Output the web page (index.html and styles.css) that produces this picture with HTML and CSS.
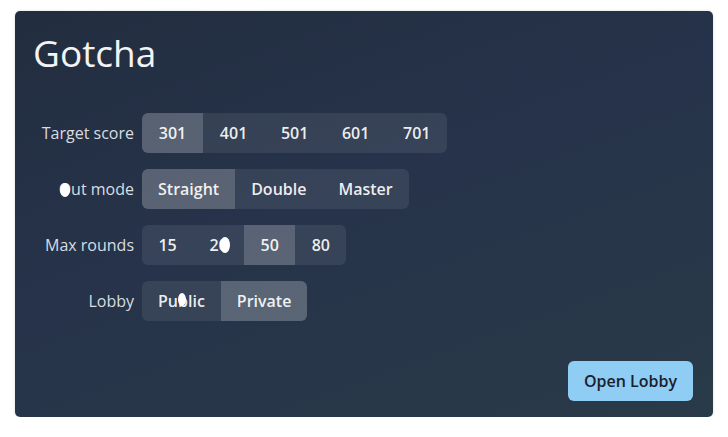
FILE: index.html
```html
<!DOCTYPE html>
<html lang="en">
<head>
    <meta charset="UTF-8">
    <meta name="viewport" content="width=device-width, initial-scale=1.0">
    <title>Gotcha</title>
    <link rel="stylesheet" href="styles.css">
</head>

<body>

<div class="modal">
    <h1 class="title">Gotcha</h1>

    <div class="options">
        <label class="option-label">Target score</label>
        <div class="group numeric">
            <button class="seg selected">301</button>
            <button class="seg">401</button>
            <button class="seg">501</button>
            <button class="seg">601</button>
            <button class="seg">701</button>
        </div>

        <label class="option-label">Out mode</label>
        <div class="group">
            <button class="seg selected">Straight</button>
            <button class="seg">Double</button>
            <button class="seg">Master</button>
        </div>

        <label class="option-label">Max rounds</label>
        <div class="group rounds">
            <button class="seg">15</button>
            <button class="seg">20</button>
            <button class="seg selected">50</button>
            <button class="seg">80</button>
        </div>

        <label class="option-label">Lobby</label>
        <div class="group">
            <button class="seg">Public</button>
            <button class="seg selected">Private</button>
        </div>
    </div>

    <div class="footer">
        <button class="open-btn">Open Lobby</button>
    </div>

    <!-- screen blots over the text -->
    <span class="blot blot-out"></span>
    <span class="blot blot-20"></span>
    <span class="blot blot-pub"></span>
</div>

</body>
</html>
```

FILE: styles.css
```css
body {
    font-family: "Open Sans", "Liberation Sans", sans-serif;
    margin: 0;
    padding: 11px 15px 0;
    background-color: #fff;
}
.modal {
    position: relative;
    width: 698px;
    box-sizing: border-box;
    padding: 20px 20px 16px;
    border-radius: 5px;
    background: linear-gradient(160deg, #222d3f 0%, #26334a 45%, #293a48 100%);
    box-shadow: 0 0 3px rgba(0, 0, 0, 0.15);
    color: rgba(255, 255, 255, 0.92);
}
.title {
    margin: 0 0 39px -2px;
    font-size: 37px;
    font-weight: 400;
    line-height: 43px;
    color: #f2f3f5;
}
.options {
    display: grid;
    grid-template-columns: 99px auto;
    column-gap: 8px;
    row-gap: 16px;
    align-items: center;
    justify-items: start;
}
.option-label {
    justify-self: end;
    font-size: 16px;
    color: #d9dde2;
}
.group {
    display: flex;
    border-radius: 6px;
    overflow: hidden;
}
.seg {
    height: 40px;
    padding: 0 16px;
    border: none;
    background: rgba(255, 255, 255, 0.08);
    color: rgba(255, 255, 255, 0.92);
    font-family: inherit;
    font-size: 16px;
    font-weight: 600;
    cursor: pointer;
}
.numeric .seg {
    padding: 0 16.8px;
}
.rounds .seg {
    padding: 0 16.4px;
}
.seg.selected {
    background: rgba(255, 255, 255, 0.24);
}
.footer {
    display: flex;
    justify-content: flex-end;
    margin-top: 40px;
}
.open-btn {
    height: 40px;
    padding: 0 16px;
    border: none;
    border-radius: 6px;
    background-color: #90cdf4;
    color: #1a202c;
    font-family: inherit;
    font-size: 16px;
    font-weight: 600;
    cursor: pointer;
}
.blot {
    position: absolute;
    background: #fff;
    border-radius: 50%;
}
.blot-out {
    left: 45px;
    top: 172px;
    width: 10px;
    height: 14px;
}
.blot-20 {
    left: 205px;
    top: 226px;
    width: 10px;
    height: 16px;
}
.blot-pub {
    left: 163px;
    top: 282px;
    width: 8px;
    height: 13px;
}
```
